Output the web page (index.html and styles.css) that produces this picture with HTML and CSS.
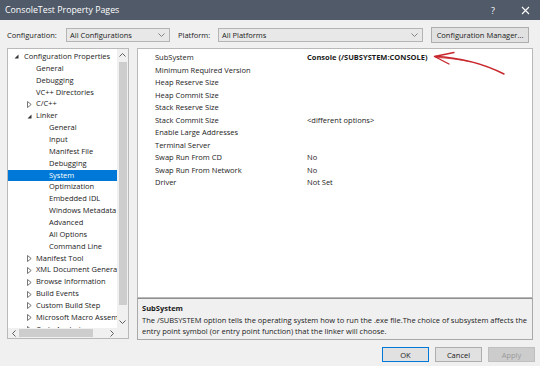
FILE: index.html
```html
<!DOCTYPE html>
<html lang="en">
<head>
    <meta charset="UTF-8">
    <meta name="viewport" content="width=device-width, initial-scale=1.0">
    <title>ConsoleTest Property Pages</title>
    <link rel="stylesheet" href="styles.css">
</head>
<body>
    <div class="dialog">
        <div class="titlebar">
            <span class="title">ConsoleTest Property Pages</span>
            <span class="help">?</span>
            <span class="close">
                <svg width="9" height="9" viewBox="0 0 9 9"><path d="M1 1 L8 8 M8 1 L1 8" stroke="#fff" stroke-width="1.1"/></svg>
            </span>
        </div>

        <div class="toolbar">
            <span class="label label-config">Configuration:</span>
            <div class="combo combo-config">
                <span>All Configurations</span>
                <svg class="chevron" width="7" height="4" viewBox="0 0 7 4"><path d="M0.5 0.5 L3.5 3.5 L6.5 0.5" fill="none" stroke="#777" stroke-width="0.9"/></svg>
            </div>
            <span class="label label-platform">Platform:</span>
            <div class="combo combo-platform">
                <span>All Platforms</span>
                <svg class="chevron" width="7" height="4" viewBox="0 0 7 4"><path d="M0.5 0.5 L3.5 3.5 L6.5 0.5" fill="none" stroke="#777" stroke-width="0.9"/></svg>
            </div>
            <button class="btn btn-manager">Configuration Manager...</button>
        </div>

        <div class="main">
            <div class="tree">
                <div class="tree-items">
                    <div class="node lvl0"><span class="twisty"><svg width="5" height="5" viewBox="0 0 5 5"><path d="M4.5 0.5 V4.5 H0.5 Z" fill="#333"/></svg></span>Configuration Properties</div>
                    <div class="node lvl1"><span class="twisty"></span>General</div>
                    <div class="node lvl1"><span class="twisty"></span>Debugging</div>
                    <div class="node lvl1"><span class="twisty"></span>VC++ Directories</div>
                    <div class="node lvl1"><span class="twisty"><svg width="5" height="7" viewBox="0 0 5 7"><path d="M0.5 0.5 L4.2 3.5 L0.5 6.5 Z" fill="none" stroke="#555" stroke-width="0.8"/></svg></span>C/C++</div>
                    <div class="node lvl1"><span class="twisty"><svg width="5" height="5" viewBox="0 0 5 5"><path d="M4.5 0.5 V4.5 H0.5 Z" fill="#333"/></svg></span>Linker</div>
                    <div class="node lvl2"><span class="twisty"></span>General</div>
                    <div class="node lvl2"><span class="twisty"></span>Input</div>
                    <div class="node lvl2"><span class="twisty"></span>Manifest File</div>
                    <div class="node lvl2"><span class="twisty"></span>Debugging</div>
                    <div class="node lvl2 selected"><span class="twisty"></span>System</div>
                    <div class="node lvl2"><span class="twisty"></span>Optimization</div>
                    <div class="node lvl2"><span class="twisty"></span>Embedded IDL</div>
                    <div class="node lvl2"><span class="twisty"></span>Windows Metadata</div>
                    <div class="node lvl2"><span class="twisty"></span>Advanced</div>
                    <div class="node lvl2"><span class="twisty"></span>All Options</div>
                    <div class="node lvl2"><span class="twisty"></span>Command Line</div>
                    <div class="node lvl1"><span class="twisty"><svg width="5" height="7" viewBox="0 0 5 7"><path d="M0.5 0.5 L4.2 3.5 L0.5 6.5 Z" fill="none" stroke="#555" stroke-width="0.8"/></svg></span>Manifest Tool</div>
                    <div class="node lvl1"><span class="twisty"><svg width="5" height="7" viewBox="0 0 5 7"><path d="M0.5 0.5 L4.2 3.5 L0.5 6.5 Z" fill="none" stroke="#555" stroke-width="0.8"/></svg></span>XML Document Generator</div>
                    <div class="node lvl1"><span class="twisty"><svg width="5" height="7" viewBox="0 0 5 7"><path d="M0.5 0.5 L4.2 3.5 L0.5 6.5 Z" fill="none" stroke="#555" stroke-width="0.8"/></svg></span>Browse Information</div>
                    <div class="node lvl1"><span class="twisty"><svg width="5" height="7" viewBox="0 0 5 7"><path d="M0.5 0.5 L4.2 3.5 L0.5 6.5 Z" fill="none" stroke="#555" stroke-width="0.8"/></svg></span>Build Events</div>
                    <div class="node lvl1"><span class="twisty"><svg width="5" height="7" viewBox="0 0 5 7"><path d="M0.5 0.5 L4.2 3.5 L0.5 6.5 Z" fill="none" stroke="#555" stroke-width="0.8"/></svg></span>Custom Build Step</div>
                    <div class="node lvl1"><span class="twisty"><svg width="5" height="7" viewBox="0 0 5 7"><path d="M0.5 0.5 L4.2 3.5 L0.5 6.5 Z" fill="none" stroke="#555" stroke-width="0.8"/></svg></span>Microsoft Macro Assembler</div>
                    <div class="node lvl1"><span class="twisty"><svg width="5" height="7" viewBox="0 0 5 7"><path d="M0.5 0.5 L4.2 3.5 L0.5 6.5 Z" fill="none" stroke="#555" stroke-width="0.8"/></svg></span>Code Analysis</div>
                </div>
                <div class="vscroll">
                    <span class="sb-btn"><svg width="7" height="4" viewBox="0 0 7 4"><path d="M0.5 3.5 L3.5 0.5 L6.5 3.5" fill="none" stroke="#606060" stroke-width="1"/></svg></span>
                    <span class="vthumb"></span>
                    <span class="sb-fill"></span>
                    <span class="sb-btn"><svg width="7" height="4" viewBox="0 0 7 4"><path d="M0.5 0.5 L3.5 3.5 L6.5 0.5" fill="none" stroke="#606060" stroke-width="1"/></svg></span>
                </div>
                <div class="hscroll">
                    <span class="sb-btn"><svg width="4" height="7" viewBox="0 0 4 7"><path d="M3.5 0.5 L0.5 3.5 L3.5 6.5" fill="none" stroke="#606060" stroke-width="1"/></svg></span>
                    <span class="hthumb"></span>
                    <span class="sb-fill"></span>
                    <span class="sb-btn"><svg width="4" height="7" viewBox="0 0 4 7"><path d="M0.5 0.5 L3.5 3.5 L0.5 6.5" fill="none" stroke="#606060" stroke-width="1"/></svg></span>
                </div>
                <div class="corner"></div>
            </div>

            <div class="right">
                <div class="grid">
                    <div class="row"><span class="name">SubSystem</span><span class="value strong">Console (/SUBSYSTEM:CONSOLE)</span></div>
                    <div class="row"><span class="name">Minimum Required Version</span><span class="value"></span></div>
                    <div class="row"><span class="name">Heap Reserve Size</span><span class="value"></span></div>
                    <div class="row"><span class="name">Heap Commit Size</span><span class="value"></span></div>
                    <div class="row"><span class="name">Stack Reserve Size</span><span class="value"></span></div>
                    <div class="row"><span class="name">Stack Commit Size</span><span class="value">&lt;different options&gt;</span></div>
                    <div class="row"><span class="name">Enable Large Addresses</span><span class="value"></span></div>
                    <div class="row"><span class="name">Terminal Server</span><span class="value"></span></div>
                    <div class="row"><span class="name">Swap Run From CD</span><span class="value">No</span></div>
                    <div class="row"><span class="name">Swap Run From Network</span><span class="value">No</span></div>
                    <div class="row"><span class="name">Driver</span><span class="value">Not Set</span></div>

                    <!-- hand-drawn annotation over the grid -->
                    <svg class="annotation" width="396" height="40" viewBox="0 0 396 40">
                        <path d="M297 7.5 Q 334 9 366 25" fill="none" stroke="#c8262c" stroke-width="1.4" stroke-linecap="round"/>
                        <path d="M299 8.5 Q 318 9.5 333 13" fill="none" stroke="#c8262c" stroke-width="0.8" stroke-linecap="round"/>
                        <path d="M316 3.5 L296.5 7.5 L311 15" fill="none" stroke="#c8262c" stroke-width="1.4" stroke-linecap="round" stroke-linejoin="round"/>
                    </svg>
                </div>
                <div class="desc">
                    <div class="desc-title">SubSystem</div>
                    <div class="desc-text">The /SUBSYSTEM option tells the operating system how to run the .exe file.The choice of subsystem affects the entry point symbol (or entry point function) that the linker will choose.</div>
                </div>
            </div>
        </div>

        <div class="buttons">
            <button class="btn btn-ok">OK</button>
            <button class="btn">Cancel</button>
            <button class="btn btn-disabled">Apply</button>
        </div>
    </div>
</body>
</html>
```

FILE: styles.css
```css
body {
    margin: 0;
    font-family: "Open Sans", "Noto Sans", sans-serif;
    font-size: 7.5px;
    color: #1b1b1b;
    background-color: #f0f0f0;
}
.dialog {
    width: 540px;
    height: 366px;
    background-color: #f0f0f0;
    overflow: hidden;
}

/* title bar */
.titlebar {
    height: 20px;
    background-color: #505a69;
    color: #fff;
    display: flex;
    align-items: center;
    padding-left: 5px;
}
.titlebar .title {
    flex: 1;
    font-size: 8.8px;
}
.titlebar .help {
    font-size: 9px;
    width: 30px;
}
.titlebar .close {
    width: 19px;
    display: flex;
}

/* toolbar */
.toolbar {
    display: flex;
    align-items: center;
    height: 16px;
    margin-top: 7px;
    padding-left: 7px;
}
.label-config {
    width: 59px;
}
.label-platform {
    width: 40px;
    margin-left: 8px;
}
.combo {
    height: 14px;
    box-sizing: border-box;
    border: 1px solid #b4b4b4;
    background-color: #e8e8e8;
    display: flex;
    align-items: center;
    padding: 0 4px 0 3px;
}
.combo span {
    flex: 1;
}
.combo-config {
    width: 104px;
}
.combo-platform {
    width: 205px;
}
.btn {
    font-family: "Open Sans", "Noto Sans", sans-serif;
    font-size: 7.5px;
    color: #1b1b1b;
    height: 15px;
    box-sizing: border-box;
    border: 1px solid #adadad;
    background-color: #e1e1e1;
    padding: 0;
    width: 47px;
}
.btn-manager {
    margin-left: 8px;
    width: 98px;
    height: 16px;
}

/* main area */
.main {
    display: flex;
    margin-top: 5px;
    padding-left: 7px;
    height: 292px;
}
.tree {
    width: 122px;
    height: 291px;
    box-sizing: border-box;
    border: 1px solid #b9b9b9;
    background-color: #fff;
    display: grid;
    grid-template-columns: 1fr 11px;
    grid-template-rows: 1fr 10px;
}
.tree-items {
    overflow: hidden;
    padding-top: 2px;
    white-space: nowrap;
}
.node {
    height: 11.86px;
    line-height: 11.86px;
    display: flex;
    align-items: center;
}
.node.lvl0 {
    padding-left: 5px;
}
.node.lvl1 {
    padding-left: 17px;
}
.node.lvl2 {
    padding-left: 30px;
}
.twisty {
    width: 11px;
    flex: none;
    display: flex;
    align-items: center;
    padding-left: 1px;
    box-sizing: border-box;
}
.lvl1 .twisty {
    padding-left: 2px;
}
.node.selected {
    background-color: #0078d7;
    color: #fff;
}

/* scroll bars */
.vscroll, .hscroll, .corner {
    background-color: #f0f0f0;
}
.vscroll {
    display: flex;
    flex-direction: column;
    align-items: center;
}
.hscroll {
    display: flex;
    align-items: center;
}
.sb-btn {
    display: flex;
    align-items: center;
    justify-content: center;
    flex: none;
}
.vscroll .sb-btn {
    height: 12px;
    width: 11px;
}
.hscroll .sb-btn {
    width: 11px;
    height: 10px;
}
.sb-fill {
    flex: 1;
}
.vthumb {
    width: 8px;
    height: 243px;
    margin-top: 1px;
    background-color: #cdcdcd;
}
.hthumb {
    width: 74px;
    height: 8px;
    background-color: #cdcdcd;
}

/* property grid */
.right {
    margin-left: 8px;
    width: 396px;
    display: flex;
    flex-direction: column;
}
.grid {
    position: relative;
    height: 250px;
    box-sizing: border-box;
    border: 1px solid #b9b9b9;
    background-color: #fff;
    padding: 2px 0 0 10px;
}
.row {
    display: flex;
    height: 12.5px;
    line-height: 12.5px;
}
.row .name {
    width: 152px;
    padding-left: 7px;
}
.row .value.strong {
    font-weight: bold;
}
.annotation {
    position: absolute;
    left: 0;
    top: 0;
}

/* description pane */
.desc {
    height: 42px;
    box-sizing: border-box;
    border: 1px solid #a9a9a9;
    border-top-color: #8f8f8f;
    padding: 4px 4px 0 4px;
    line-height: 11.5px;
}
.desc-title {
    font-weight: bold;
}

/* dialog buttons */
.buttons {
    display: flex;
    justify-content: flex-end;
    gap: 6px;
    margin-top: 7px;
    padding-right: 5px;
}
.btn-ok {
    border-color: #0078d7;
}
.btn-disabled {
    color: #9a9a9a;
    background-color: #cccccc;
    border-color: #bfbfbf;
}
```
